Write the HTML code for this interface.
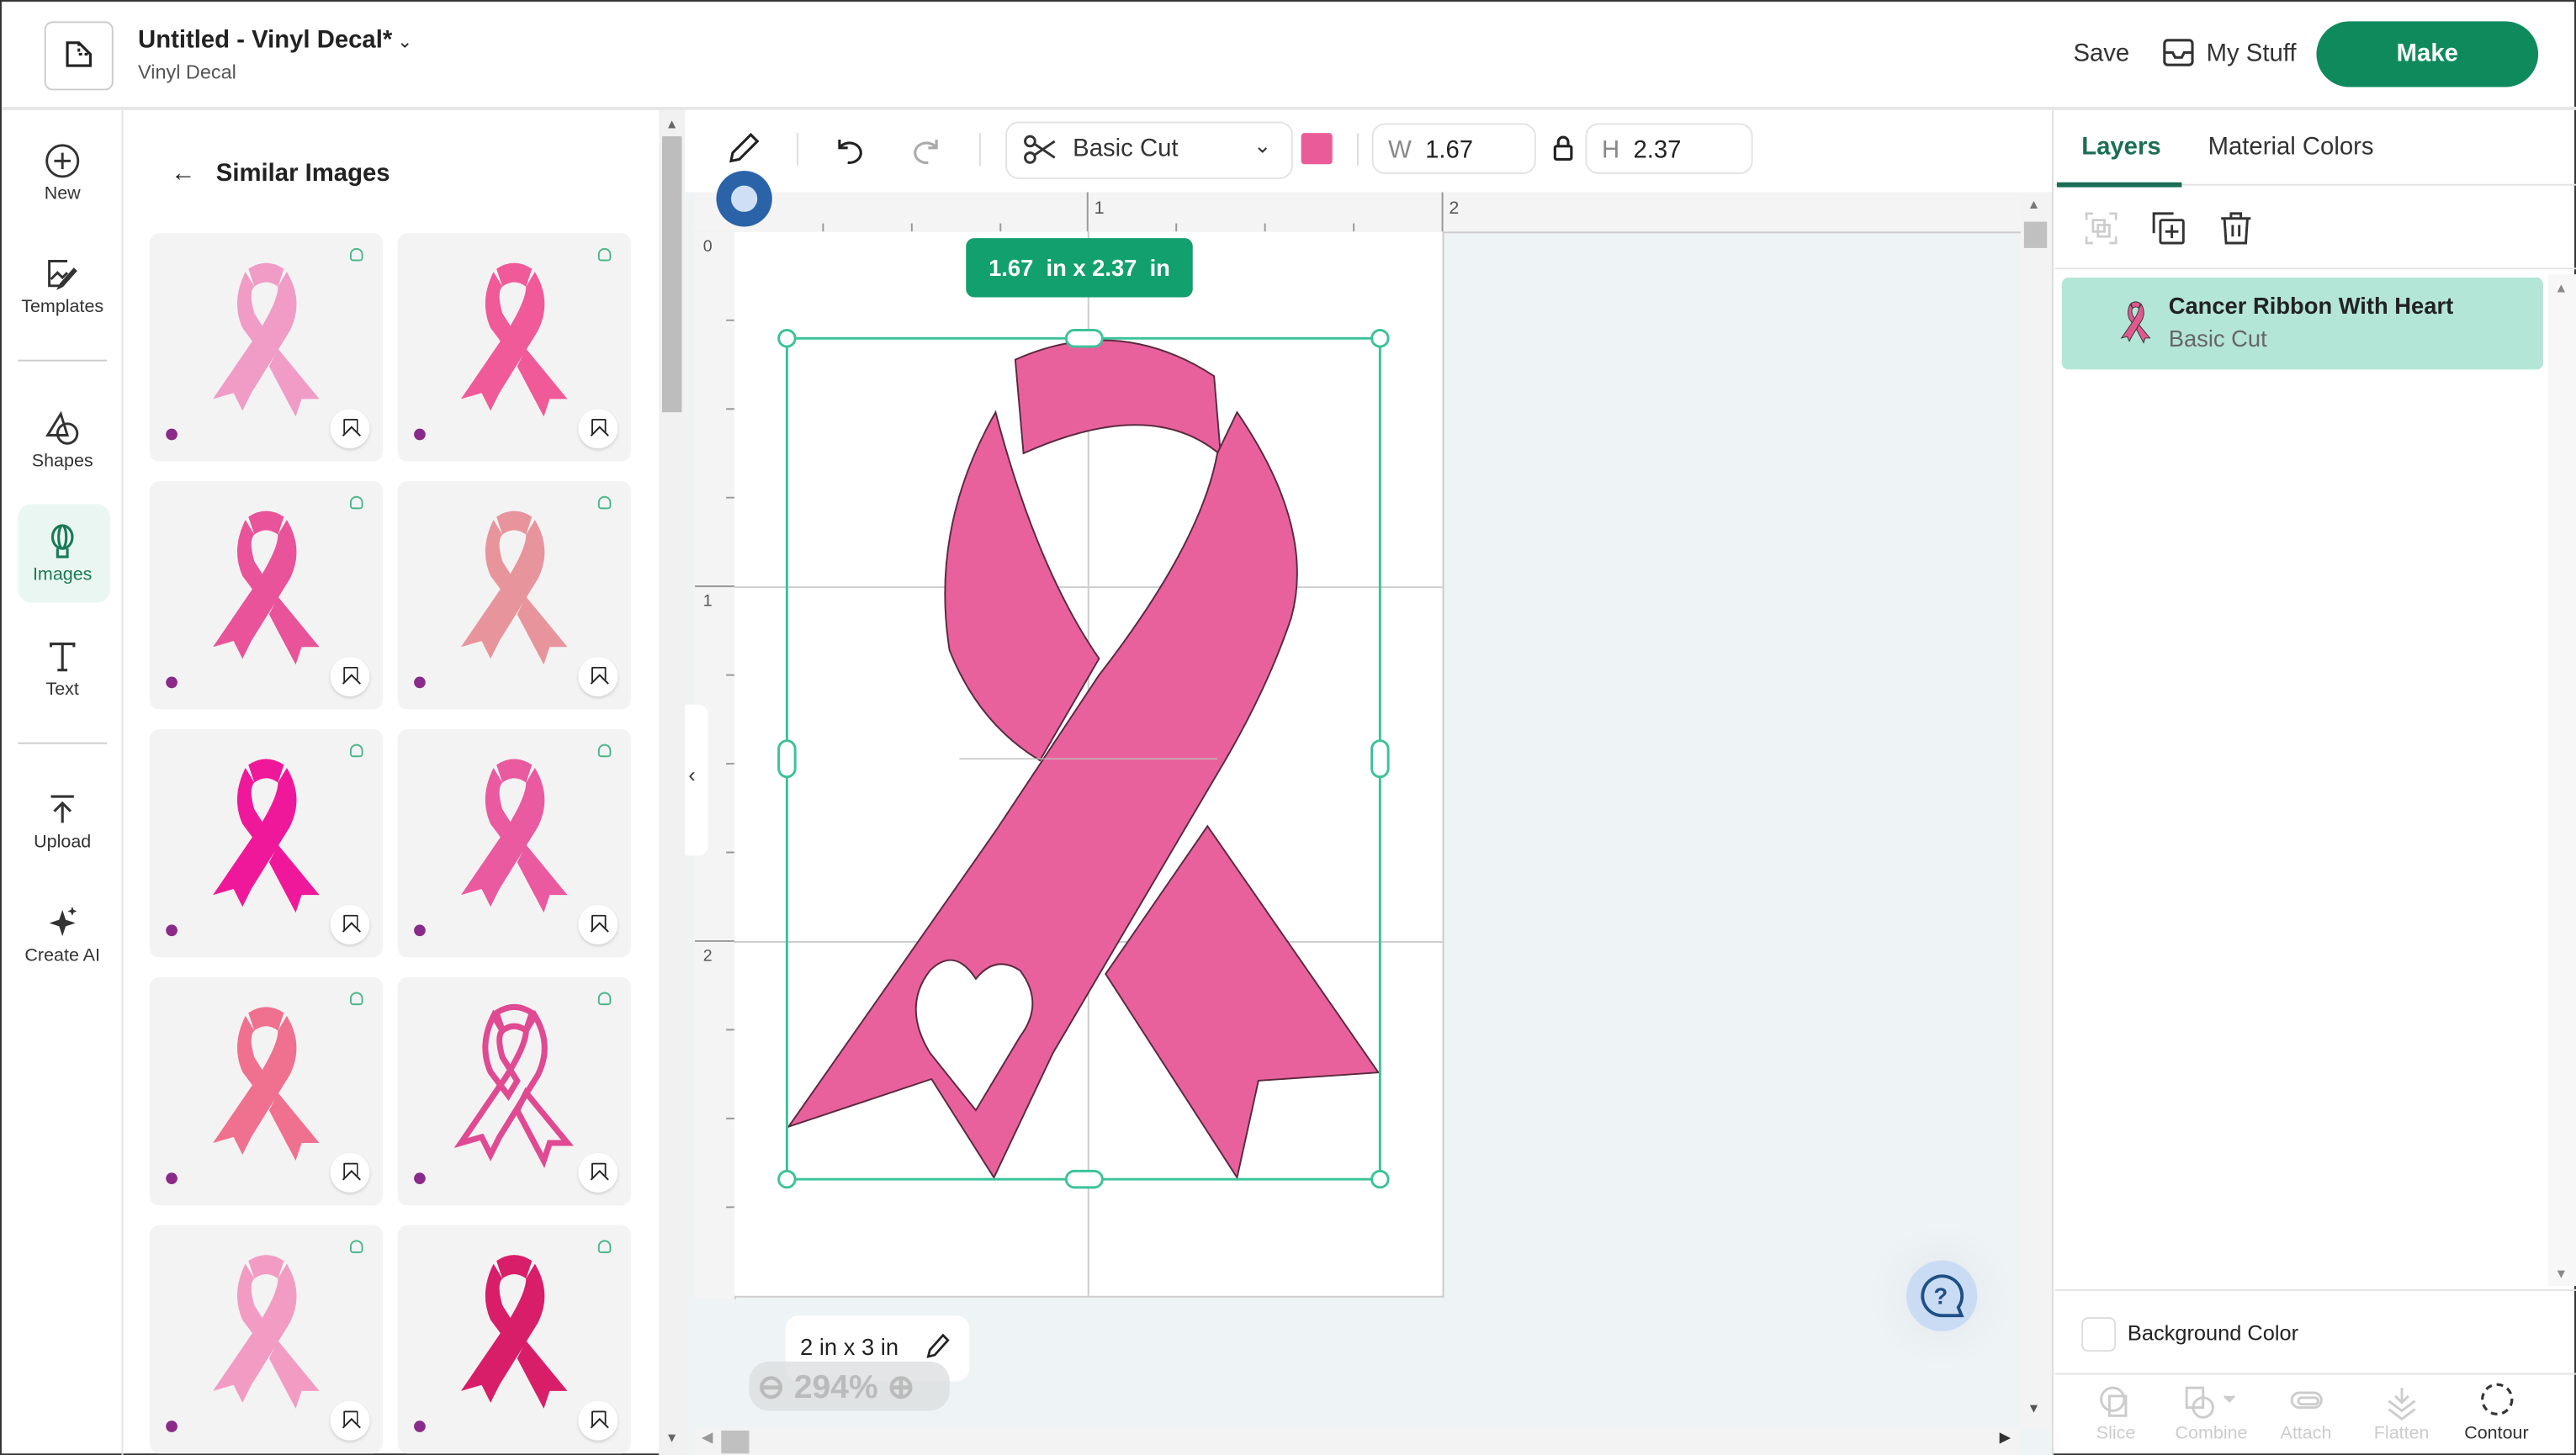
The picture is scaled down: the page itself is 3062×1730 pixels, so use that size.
<!DOCTYPE html>
<html><head><meta charset="utf-8"><style>
html,body{margin:0;padding:0;width:3062px;height:1730px;overflow:hidden;background:#fff}
#w{width:1568px;height:886px;transform:scale(1.95281);transform-origin:0 0;position:relative;font-family:"Liberation Sans",sans-serif;color:#222;background:#fff;border:1px solid #333;box-sizing:border-box}
.a{position:absolute}
.nav{position:absolute;left:0;width:74px;text-align:center;font-size:11px;color:#333}
.nav svg{display:block;margin:0 auto 3px}
.card{position:absolute;width:142px;height:139px;background:#f3f3f3;border-radius:6px}
.bm{position:absolute;right:8px;bottom:8px;width:24px;height:24px;border-radius:50%;background:#fff;box-shadow:0 1px 2px rgba(0,0,0,.15)}
.bm::after{content:"";position:absolute;left:8px;top:6px;width:7px;height:9px;border:1.5px solid #222;border-bottom:none;border-radius:1px}
.bm::before{content:"";position:absolute;left:9px;top:12px;width:7px;height:7px;border-left:1.5px solid #222;border-top:1.5px solid #222;transform:rotate(45deg);z-index:1;background:#fff}
.dot{position:absolute;left:10px;bottom:13px;width:7px;height:7px;border-radius:50%;background:#8a2a8a}
.lk{position:absolute;right:12px;top:9px;width:6px;height:6px;border:1.3px solid #4cb88a;border-radius:50% 50% 2px 2px}
</style></head><body><div id="w">
<svg width="0" height="0" style="position:absolute"><defs>
<symbol id="rb" viewBox="0 0 100 110"><path d="M38 8 Q50 0 62 8 L58 20 Q50 14 42 20 Z"/><path d="M36 10 Q26 30 34 48 L46 64 L52 54 L42 38 Q38 24 42 20 Z"/><path d="M64 10 Q76 30 66 50 L40 92 L34 104 L28 92 L14 96 L44 52 Q58 30 58 20 Z"/><path d="M58 62 L86 96 L74 96 L70 108 L52 74 Z"/></symbol>
</defs></svg>

<div class="a" style="left:26px;top:12px;width:40px;height:40px;border:1px solid #ccc;border-radius:5px"></div>
<svg class="a" style="left:38px;top:23px" width="18" height="18" viewBox="0 0 18 18" fill="none" stroke="#222" stroke-width="1.6"><path d="M2 2h7l7 7v7H2z"/><path d="M9 2v7h7" stroke-dasharray="2 1.5"/></svg>
<div class="a" style="left:83px;top:15px;font-size:15px;font-weight:bold;color:#222">Untitled - Vinyl Decal*<span style="font-weight:normal;font-size:11px"> ⌄</span></div>
<div class="a" style="left:83px;top:36px;font-size:12px;color:#555">Vinyl Decal</div>
<div class="a" style="left:1261px;top:23px;font-size:15px;color:#333">Save</div>
<svg class="a" style="left:1315px;top:22px" width="20" height="18" viewBox="0 0 20 18" fill="none" stroke="#333" stroke-width="1.6"><rect x="1.5" y="1.5" width="17" height="15" rx="2"/><path d="M1.5 9h5l1.5 3h4l1.5-3h5"/></svg>
<div class="a" style="left:1342px;top:23px;font-size:15px;color:#333">My Stuff</div>
<div class="a" style="left:1409px;top:12px;width:135px;height:40px;border-radius:20px;background:#0f8a5c;color:#fff;font-size:15px;font-weight:bold;text-align:center;line-height:40px">Make</div>
<div class="a" style="left:0;top:64px;width:1568px;height:2px;background:#e6e6e6"></div>

<div class="a" style="left:73px;top:66px;width:1px;height:820px;background:#e4e4e4"></div>
<div class="nav" style="top:86px"><svg width="22" height="22" viewBox="0 0 22 22" fill="none" stroke="#333" stroke-width="1.5"><circle cx="11" cy="11" r="9.5"/><path d="M11 6v10M6 11h10"/></svg>New</div>
<div class="nav" style="top:155px"><svg width="22" height="22" viewBox="0 0 22 22" fill="none" stroke="#333" stroke-width="1.5"><path d="M14 3H3v15h6"/><path d="M4 14l4-4 3 3 3-3"/><path d="M19 9l-8 9-2 1 1-2 8-9z"/></svg>Templates</div>
<div class="a" style="left:10px;top:218px;width:54px;height:1px;background:#ccc"></div>
<div class="nav" style="top:249px"><svg width="22" height="22" viewBox="0 0 22 22" fill="none" stroke="#333" stroke-width="1.5"><path d="M10 2L2 15h12z"/><circle cx="14" cy="14" r="6"/></svg>Shapes</div>
<div class="a" style="left:10px;top:306px;width:56px;height:60px;background:#eaf6f1;border-radius:8px"></div>
<div class="nav" style="top:318px;color:#1a7a55"><svg width="22" height="22" viewBox="0 0 22 22" fill="none" stroke="#1a7a55" stroke-width="1.6"><ellipse cx="11" cy="8" rx="6" ry="7"/><ellipse cx="11" cy="8" rx="2.3" ry="7"/><path d="M8 15v5h6v-5"/></svg>Images</div>
<div class="nav" style="top:388px"><svg width="22" height="22" viewBox="0 0 22 22" fill="none" stroke="#333" stroke-width="1.6"><path d="M4 5V3h14v2M11 3v16M8 19h6"/></svg>Text</div>
<div class="a" style="left:10px;top:451px;width:54px;height:1px;background:#ccc"></div>
<div class="nav" style="top:481px"><svg width="22" height="22" viewBox="0 0 22 22" fill="none" stroke="#333" stroke-width="1.6"><path d="M4 3h14M11 19V7M6 12l5-5 5 5"/></svg>Upload</div>
<div class="nav" style="top:550px"><svg width="22" height="22" viewBox="0 0 22 22" fill="#333"><path d="M11 3l2 6 6 2-6 2-2 6-2-6-6-2 6-2z"/><path d="M17 1l.8 2 2 .8-2 .8-.8 2-.8-2-2-.8 2-.8z"/></svg>Create AI</div>

<div class="a" style="left:103px;top:96px;font-size:15px;font-weight:bold">←&nbsp;&nbsp;&nbsp;Similar Images</div>
<div class="a" style="left:400px;top:66px;width:16px;height:820px;background:#f1f1f1"></div>
<div class="a" style="left:402px;top:82px;width:12px;height:168px;background:#bdbdbd"></div>
<div class="a" style="left:404px;top:70px;font-size:8px;color:#666">▲</div>
<div class="a" style="left:404px;top:870px;font-size:8px;color:#666">▼</div>

<div class="card" style="left:90px;top:141px"><svg class="a" style="left:26px;top:10px" width="90" height="108" fill="#f09cc7"><use href="#rb"/></svg><div class="lk"></div><div class="dot"></div><div class="bm"></div></div>
<div class="card" style="left:241px;top:141px"><svg class="a" style="left:26px;top:10px" width="90" height="108" fill="#f05a98"><use href="#rb"/></svg><div class="lk"></div><div class="dot"></div><div class="bm"></div></div>
<div class="card" style="left:90px;top:292px"><svg class="a" style="left:26px;top:10px" width="90" height="108" fill="#e8539a"><use href="#rb"/></svg><div class="lk"></div><div class="dot"></div><div class="bm"></div></div>
<div class="card" style="left:241px;top:292px"><svg class="a" style="left:26px;top:10px" width="90" height="108" fill="#e8949c"><use href="#rb"/></svg><div class="lk"></div><div class="dot"></div><div class="bm"></div></div>
<div class="card" style="left:90px;top:443px"><svg class="a" style="left:26px;top:10px" width="90" height="108" fill="#f0189a"><use href="#rb"/></svg><div class="lk"></div><div class="dot"></div><div class="bm"></div></div>
<div class="card" style="left:241px;top:443px"><svg class="a" style="left:26px;top:10px" width="90" height="108" fill="#ea5aa0"><use href="#rb"/></svg><div class="lk"></div><div class="dot"></div><div class="bm"></div></div>
<div class="card" style="left:90px;top:594px"><svg class="a" style="left:26px;top:10px" width="90" height="108" fill="#f07090"><use href="#rb"/></svg><div class="lk"></div><div class="dot"></div><div class="bm"></div></div>
<div class="card" style="left:241px;top:594px"><svg class="a" style="left:26px;top:10px" width="90" height="108" fill="none" stroke="#e04a92" stroke-width="4"><use href="#rb"/></svg><div class="lk"></div><div class="dot"></div><div class="bm"></div></div>
<div class="card" style="left:90px;top:745px"><svg class="a" style="left:26px;top:10px" width="90" height="108" fill="#f29cc4"><use href="#rb"/></svg><div class="lk"></div><div class="dot"></div><div class="bm"></div></div>
<div class="card" style="left:241px;top:745px"><svg class="a" style="left:26px;top:10px" width="90" height="108" fill="#d81e68"><use href="#rb"/></svg><div class="lk"></div><div class="dot"></div><div class="bm"></div></div>

<div class="a" style="left:416px;top:66px;width:832px;height:820px;background:#eef3f5"></div>
<div class="a" style="left:416px;top:66px;width:832px;height:50px;background:#fff"></div>
<svg class="a" style="left:441px;top:78px" width="22" height="22" viewBox="0 0 22 22" fill="none" stroke="#222" stroke-width="1.6"><path d="M15 3l4 4L8 18l-5 1 1-5z"/></svg>
<div class="a" style="left:484px;top:80px;width:1px;height:20px;background:#ddd"></div>
<svg class="a" style="left:506px;top:80px" width="20" height="20" viewBox="0 0 20 20" fill="none" stroke="#222" stroke-width="1.6"><path d="M4 4v5h5"/><path d="M4 9a7 6 0 1 1 5 9"/></svg>
<svg class="a" style="left:553px;top:80px" width="20" height="20" viewBox="0 0 20 20" fill="none" stroke="#aaa" stroke-width="1.6"><path d="M16 4v5h-5"/><path d="M16 9a7 6 0 1 0-5 9"/></svg>
<div class="a" style="left:595px;top:80px;width:1px;height:20px;background:#ddd"></div>
<div class="a" style="left:611px;top:73px;width:173px;height:33px;border:1px solid #e3e3e3;border-radius:8px;background:#fff"></div>
<svg class="a" style="left:621px;top:80px" width="22" height="20" viewBox="0 0 22 20" fill="none" stroke="#333" stroke-width="1.5"><circle cx="5" cy="5" r="3"/><circle cx="5" cy="15" r="3"/><path d="M7.5 6.5L20 15M7.5 13.5L20 5"/></svg>
<div class="a" style="left:652px;top:81px;font-size:15px;color:#333">Basic Cut</div>
<div class="a" style="left:762px;top:80px;font-size:13px;color:#333">⌄</div>
<div class="a" style="left:791px;top:80px;width:19px;height:19px;background:#ea5c99;border-radius:2px"></div>
<div class="a" style="left:825px;top:80px;width:1px;height:20px;background:#ddd"></div>
<div class="a" style="left:834px;top:74px;width:100px;height:31px;border:1px solid #e3e3e3;border-radius:8px;background:#fff;font-size:15px;line-height:31px;padding-left:9px;box-sizing:border-box"><span style="color:#888">W</span>&nbsp;&nbsp;1.67</div>
<svg class="a" style="left:944px;top:81px" width="13" height="16" viewBox="0 0 13 16" fill="none" stroke="#222" stroke-width="1.6"><rect x="1.5" y="7" width="10" height="8" rx="1"/><path d="M3.5 7V4.5a3 3 0 0 1 6 0V7"/></svg>
<div class="a" style="left:964px;top:74px;width:102px;height:31px;border:1px solid #e3e3e3;border-radius:8px;background:#fff;font-size:15px;line-height:31px;padding-left:9px;box-sizing:border-box"><span style="color:#888">H</span>&nbsp;&nbsp;2.37</div>

<div class="a" style="left:422px;top:116px;width:807px;height:24px;background:#f4f4f4;border-bottom:1px solid #ccc"></div>
<div class="a" style="left:422px;top:140px;width:24px;height:650px;background:#f4f4f4;border-right:1px solid #ccc"></div>
<svg class="a" style="left:422px;top:116px" width="807" height="674">
<g stroke="#999" stroke-width="1">
<line x1="239" y1="0" x2="239" y2="24"/><line x1="455" y1="0" x2="455" y2="24"/>
<line x1="78" y1="19" x2="78" y2="24"/><line x1="132" y1="19" x2="132" y2="24"/><line x1="186" y1="19" x2="186" y2="24"/><line x1="293" y1="19" x2="293" y2="24"/><line x1="347" y1="19" x2="347" y2="24"/><line x1="401" y1="19" x2="401" y2="24"/>
<line x1="0" y1="240" x2="24" y2="240"/><line x1="0" y1="456" x2="24" y2="456"/>
<line x1="19" y1="78" x2="24" y2="78"/><line x1="19" y1="132" x2="24" y2="132"/><line x1="19" y1="186" x2="24" y2="186"/><line x1="19" y1="294" x2="24" y2="294"/><line x1="19" y1="348" x2="24" y2="348"/><line x1="19" y1="402" x2="24" y2="402"/><line x1="19" y1="510" x2="24" y2="510"/><line x1="19" y1="564" x2="24" y2="564"/><line x1="19" y1="618" x2="24" y2="618"/>
</g>
<text x="243" y="13" font-size="11" fill="#555" font-family="Liberation Sans">1</text><text x="459" y="13" font-size="11" fill="#555" font-family="Liberation Sans">2</text>
<text x="5" y="36" font-size="10" fill="#555" font-family="Liberation Sans">0</text><text x="5" y="252" font-size="10" fill="#555" font-family="Liberation Sans">1</text><text x="5" y="468" font-size="10" fill="#555" font-family="Liberation Sans">2</text><text x="5" y="684" font-size="10" fill="#555" font-family="Liberation Sans">3</text>
</svg>
<div class="a" style="left:446px;top:140px;width:431px;height:648px;background:#fff;border-right:1px solid #ccc;border-bottom:1px solid #ccc"></div>
<div class="a" style="left:661px;top:140px;width:1px;height:648px;background:#ccc"></div>
<div class="a" style="left:446px;top:356px;width:431px;height:1px;background:#ccc"></div>
<div class="a" style="left:446px;top:572px;width:431px;height:1px;background:#ccc"></div>
<div class="a" style="left:435px;top:103px;width:34px;height:34px;border-radius:50%;background:#2b63a8"></div>
<div class="a" style="left:443px;top:111px;width:18px;height:18px;border-radius:50%;background:#cfe0f5;border:1px solid #2b63a8;box-sizing:border-box"></div>

<svg class="a" style="left:0;top:0" width="1568" height="886">
<g fill="#e9619c" stroke="#5a2a40" stroke-width="1">
<path d="M617 218 Q680 190 738 228 L742 276 Q700 240 622 275 Z"/>
<path d="M605 250 Q565 320 577 395 Q595 440 632 462 L668 400 Q630 345 605 250 Z"/>
<path d="M752 250 Q800 320 785 375 Q770 420 740 470 L640 640 L604 716 L566 656 L479 685 L605 505 L668 410 Q730 330 740 275 Z"/>
<path d="M734 502 L838 652 L765 657 L752 716 L672 592 Z"/>
</g>
<path d="M593 675 L565 640 Q548 612 565 590 Q580 575 593 595 Q605 580 620 590 Q635 610 620 630 Z" fill="#fff" stroke="#5a2a40" stroke-width="1"/>
<line x1="583" y1="461" x2="740" y2="461" stroke="#bbb" stroke-width="0.7"/>
<g fill="none" stroke="#3cc29a" stroke-width="1.5">
<rect x="478" y="205" width="361" height="512"/>
</g>
<g fill="#fff" stroke="#3cc29a" stroke-width="1.5">
<circle cx="478" cy="205" r="5"/><circle cx="839" cy="205" r="5"/><circle cx="478" cy="717" r="5"/><circle cx="839" cy="717" r="5"/>
<rect x="648" y="200" width="22" height="10" rx="5"/><rect x="648" y="712" width="22" height="10" rx="5"/>
<rect x="473" y="450" width="10" height="22" rx="5"/><rect x="834" y="450" width="10" height="22" rx="5"/>
</g>
</svg>
<div class="a" style="left:587px;top:144px;width:138px;height:36px;background:#12a06e;border-radius:5px;color:#fff;font-size:14px;font-weight:bold;text-align:center;line-height:36px">1.67&nbsp; in x 2.37&nbsp; in</div>

<div class="a" style="left:416px;top:428px;width:14px;height:92px;background:#fff;border-radius:0 6px 6px 0"></div>
<div class="a" style="left:418px;top:463px;font-size:13px;color:#333">‹</div>

<div class="a" style="left:477px;top:800px;width:112px;height:40px;background:#fff;border-radius:8px"></div>
<div class="a" style="left:486px;top:811px;font-size:14px;color:#222">2 in x 3 in</div>
<svg class="a" style="left:562px;top:810px" width="16" height="18" viewBox="0 0 16 18" fill="none" stroke="#222" stroke-width="1.4"><path d="M11 2l3 3-8 9-4 1 1-4z"/></svg>
<div class="a" style="left:455px;top:828px;width:122px;height:30px;background:rgba(220,222,224,.8);border-radius:12px"></div>
<div class="a" style="left:460px;top:831px;font-size:20px;font-weight:bold;color:#bbb">⊖ 294% ⊕</div>
<div class="a" style="left:1138px;top:745px;width:86px;height:86px;border-radius:50%;background:radial-gradient(circle,#c9dcf4 0 35%,rgba(230,235,240,.6) 36%,rgba(238,243,245,0) 70%)"></div>
<svg class="a" style="left:1166px;top:773px" width="30" height="32" viewBox="0 0 30 32" fill="none" stroke="#1f4f86" stroke-width="2"><path d="M15 27A12 12 0 1 1 25 22l2 5z"/><text x="10" y="20" font-size="14" fill="#1f4f86" stroke="none" font-family="Liberation Sans" font-weight="bold">?</text></svg>
<div class="a" style="left:1229px;top:116px;width:18px;height:752px;background:#f3f3f3"></div>
<div class="a" style="left:1231px;top:134px;width:14px;height:16px;background:#c0c0c0"></div>
<div class="a" style="left:1233px;top:119px;font-size:8px;color:#777">▲</div>
<div class="a" style="left:1233px;top:852px;font-size:8px;color:#555">▼</div>
<div class="a" style="left:422px;top:868px;width:807px;height:18px;background:#f3f3f3"></div>
<div class="a" style="left:438px;top:870px;width:17px;height:14px;background:#c0c0c0"></div>
<div class="a" style="left:1216px;top:869px;font-size:9px;color:#333">▶</div>
<div class="a" style="left:426px;top:869px;font-size:9px;color:#999">◀</div>

<div class="a" style="left:1248px;top:66px;width:1px;height:820px;background:#ddd"></div>
<div class="a" style="left:1266px;top:80px;font-size:15px;font-weight:bold;color:#1a6e55">Layers</div>
<div class="a" style="left:1343px;top:80px;font-size:15px;color:#333">Material Colors</div>
<div class="a" style="left:1250px;top:111px;width:318px;height:1px;background:#e3e3e3"></div>
<div class="a" style="left:1251px;top:110px;width:76px;height:3px;background:#1a6e55"></div>
<svg class="a" style="left:1268px;top:128px" width="20" height="20" viewBox="0 0 20 20" fill="none" stroke="#ccc" stroke-width="1.4"><path d="M1 5V1h4M15 1h4v4M19 15v4h-4M5 19H1v-4"/><rect x="5" y="5" width="7" height="7"/><rect x="8" y="8" width="7" height="7"/></svg>
<svg class="a" style="left:1309px;top:128px" width="20" height="20" viewBox="0 0 20 20" fill="none" stroke="#333" stroke-width="1.5"><path d="M13 1H1v12"/><rect x="5" y="5" width="14" height="14" rx="1"/><path d="M12 8v8M8 12h8"/></svg>
<svg class="a" style="left:1350px;top:128px" width="20" height="20" viewBox="0 0 20 20" fill="none" stroke="#333" stroke-width="1.5"><path d="M1 4h18M7 4V1h6v3M3 4l1 15h12l1-15M8 8v7M12 8v7"/></svg>
<div class="a" style="left:1250px;top:162px;width:318px;height:1px;background:#e3e3e3"></div>
<div class="a" style="left:1254px;top:168px;width:293px;height:56px;background:#b4e6d7;border-radius:4px"></div>
<svg class="a" style="left:1287px;top:181px" width="24" height="28" fill="#e05a90" stroke="#333" stroke-width="2"><use href="#rb"/></svg>
<div class="a" style="left:1319px;top:177px;font-size:14px;font-weight:bold;color:#222">Cancer Ribbon With Heart</div>
<div class="a" style="left:1319px;top:197px;font-size:14px;color:#666">Basic Cut</div>
<div class="a" style="left:1550px;top:166px;width:18px;height:616px;background:#f7f7f7"></div>
<div class="a" style="left:1554px;top:170px;font-size:8px;color:#888">▲</div>
<div class="a" style="left:1554px;top:770px;font-size:8px;color:#888">▼</div>
<div class="a" style="left:1250px;top:784px;width:318px;height:1px;background:#e3e3e3"></div>
<div class="a" style="left:1266px;top:801px;width:19px;height:19px;border:1px solid #ddd;border-radius:4px"></div>
<div class="a" style="left:1294px;top:803px;font-size:13px;color:#222">Background Color</div>
<div class="a" style="left:1250px;top:835px;width:318px;height:1px;background:#e3e3e3"></div>
<div class="a" style="left:1275px;top:866px;font-size:11px;color:#ccc">Slice</div>
<div class="a" style="left:1323px;top:866px;font-size:11px;color:#ccc">Combine</div>
<div class="a" style="left:1387px;top:866px;font-size:11px;color:#ccc">Attach</div>
<div class="a" style="left:1444px;top:866px;font-size:11px;color:#ccc">Flatten</div>
<div class="a" style="left:1499px;top:866px;font-size:11px;color:#333">Contour</div>
<svg class="a" style="left:1276px;top:842px" width="230" height="22" fill="none" stroke="#ccc" stroke-width="1.5"><circle cx="9" cy="9" r="7"/><rect x="7" y="7" width="10" height="12"/><rect x="54" y="2" width="10" height="12"/><circle cx="64" cy="14" r="6"/><path d="M77 7l3 3 3-3" fill="#ccc"/><rect x="118" y="5" width="18" height="9" rx="4.5"/><rect x="122" y="8" width="12" height="4" rx="2"/><path d="M185 2v9M181 7l4 4 4-4M177 10l8 6 8-6M177 15l8 6 8-6"/></svg>
<svg class="a" style="left:1508px;top:840px" width="22" height="22" fill="none" stroke="#333" stroke-width="1.6"><circle cx="11" cy="11" r="9" stroke-dasharray="4 3"/></svg>
</div></body></html>
